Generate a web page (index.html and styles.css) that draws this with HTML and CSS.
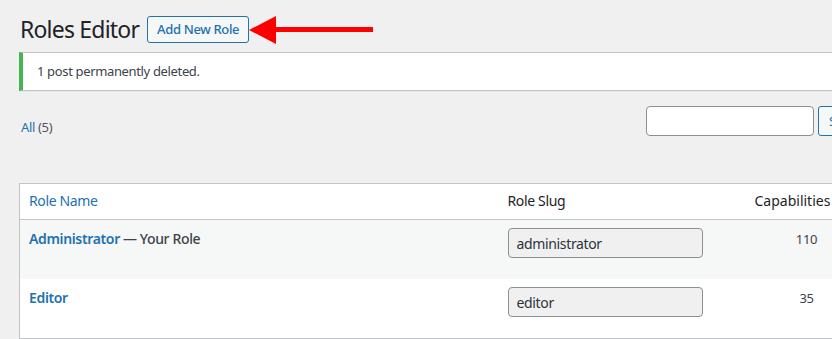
FILE: index.html
```html
<!DOCTYPE html>
<html lang="en">
<head>
    <meta charset="UTF-8">
    <meta name="viewport" content="width=device-width, initial-scale=1.0">
    <title>Roles Editor</title>
    <link rel="stylesheet" href="styles.css">
</head>
<body>
    <div class="wrap">
        <div class="page-head">
            <h1>Roles Editor</h1>
            <a class="page-title-action" href="#">Add New Role</a>
            <svg class="arrow" width="126" height="30" viewBox="0 0 126 30">
                <polygon points="0,14 27,0 27,28" fill="#f00"/>
                <rect x="26" y="11" width="98" height="5" fill="#f00"/>
            </svg>
        </div>

        <div class="notice">
            <p>1 post permanently deleted.</p>
        </div>

        <div class="tablenav">
            <ul class="subsubsub">
                <li><a href="#">All <span class="count">(5)</span></a></li>
            </ul>
            <div class="search-box">
                <input type="search" class="search-input">
                <button class="button">Search Roles</button>
            </div>
        </div>

        <table class="roles-table">
            <colgroup>
                <col class="col-name">
                <col class="col-slug">
                <col class="col-caps">
                <col class="col-rest">
            </colgroup>
            <thead>
                <tr>
                    <th><a href="#">Role Name</a></th>
                    <th>Role Slug</th>
                    <th class="caps">Capabilities</th>
                    <th>Users</th>
                </tr>
            </thead>
            <tbody>
                <tr class="alt">
                    <td><a class="row-title" href="#">Administrator</a> <span class="post-state">— Your Role</span></td>
                    <td><input class="slug" type="text" value="administrator" readonly></td>
                    <td class="num">110</td>
                    <td class="num">1</td>
                </tr>
                <tr>
                    <td><a class="row-title" href="#">Editor</a></td>
                    <td><input class="slug" type="text" value="editor" readonly></td>
                    <td class="num">35</td>
                    <td class="num">0</td>
                </tr>
            </tbody>
        </table>
    </div>
</body>
</html>
```

FILE: styles.css
```css
html, body {
    margin: 0;
    overflow: hidden;
}
body {
    background: #f0f0f1;
    color: #3c434a;
    font-family: "Segoe UI", "Noto Sans", sans-serif;
    font-size: 13px;
    line-height: 1.4em;
    letter-spacing: -0.35px;
}
a {
    color: #2271b1;
    text-decoration: none;
}
.wrap {
    padding: 0 0 0 19px;
    width: 1100px;
}
.page-head {
    display: flex;
    align-items: center;
    height: 52px;
    padding-top: 7px;
    box-sizing: border-box;
}
.page-head h1 {
    margin: 0 8px 0 1px;
    font-size: 23px;
    font-weight: 400;
    line-height: 1.3;
    color: #1d2327;
    letter-spacing: -0.8px;
}
.page-title-action {
    border: 1px solid #2271b1;
    border-radius: 3px;
    background: #f6f7f7;
    padding: 0 9px;
    height: 25px;
    line-height: 25px;
    font-size: 13px;
    font-weight: 500;
}
.arrow {
    margin-top: 2px;
}
.notice {
    background: #fff;
    border: 1px solid #c3c4c7;
    border-left: 4px solid #46b450;
    border-right: 0;
    box-shadow: 0 1px 1px rgba(0,0,0,.04);
    padding: 0 14px;
    height: 37px;
    display: flex;
    align-items: center;
}
.notice p {
    margin: 0;
}
.tablenav {
    display: grid;
    grid-template-columns: 627px auto;
    align-items: start;
    height: 92px;
    padding-top: 15px;
    box-sizing: border-box;
}
.subsubsub {
    list-style: none;
    margin: 12px 0 0 2px;
    padding: 0;
    font-size: 13px;
}
.count {
    color: #50575e;
}
.search-box {
    display: flex;
    gap: 4px;
}
.search-input {
    width: 168px;
    height: 30px;
    box-sizing: border-box;
    border: 1px solid #8c8f94;
    border-radius: 4px;
    background: #fff;
}
.button {
    height: 30px;
    border: 1px solid #2271b1;
    border-radius: 3px;
    background: #f6f7f7;
    color: #2271b1;
    font-family: inherit;
    font-size: 13px;
    padding: 0 10px;
}
.roles-table {
    border-collapse: collapse;
    border: 1px solid #c3c4c7;
    background: #fff;
    table-layout: fixed;
    width: 1000px;
}
.col-name { width: 479px; }
.col-slug { width: 247px; }
.col-caps { width: 122px; }
.roles-table th {
    text-align: left;
    font-weight: 400;
    font-size: 14px;
    color: #1d2327;
    padding: 0 9px;
    height: 35px;
    border-bottom: 1px solid #c3c4c7;
}
.roles-table th.caps {
    letter-spacing: 0;
}
.roles-table td {
    vertical-align: top;
    padding: 10px 9px 0;
    height: 49px;
}
.roles-table tr.alt td {
    background: #f6f7f7;
}
.row-title {
    font-size: 14px;
    font-weight: 600;
}
.post-state {
    color: #3c434a;
    font-size: 14px;
    font-weight: 500;
}
.slug {
    width: 195px;
    height: 30px;
    margin-top: -2px;
    box-sizing: border-box;
    border: 1px solid #8c8f94;
    border-radius: 4px;
    background: #f0f0f1;
    color: #2c3338;
    font-family: inherit;
    font-size: 14px;
    letter-spacing: -0.35px;
    padding: 0 8px;
}
.roles-table td.num {
    text-align: center;
    padding-top: 10px;
}
```
